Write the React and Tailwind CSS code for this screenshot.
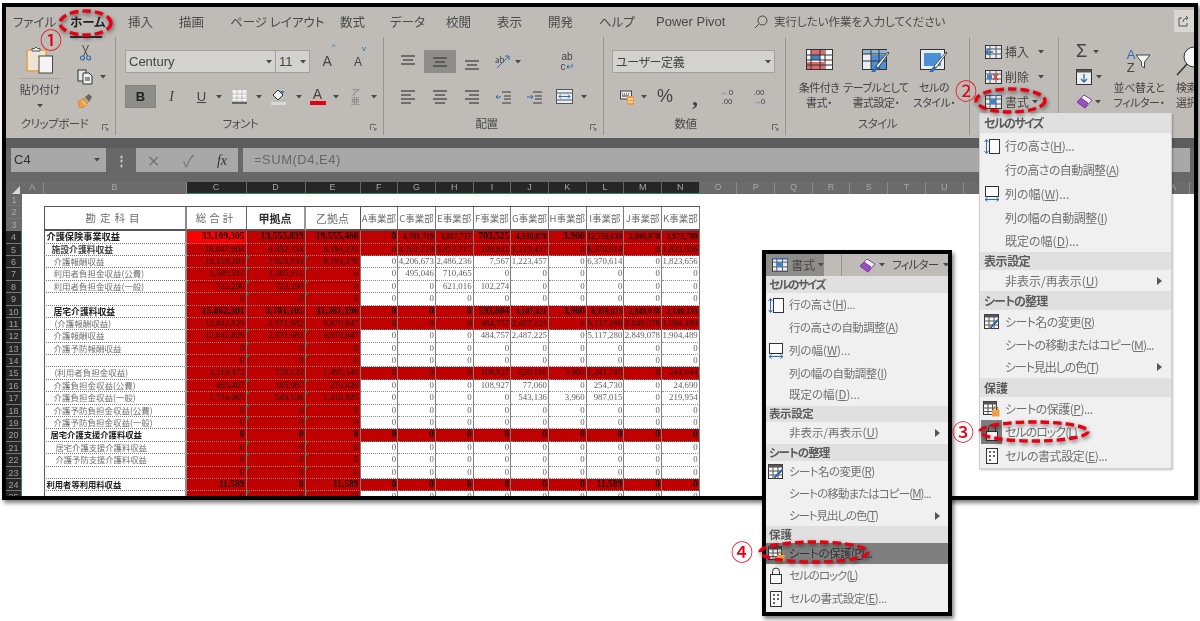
import React from 'react';

const jp = "[font-family:'Noto_Sans_CJK_JP','Liberation_Sans',sans-serif] [font-feature-settings:'palt']";

// ---- small ribbon drawings ----
function Caret({ className = '' }) {
  return (
    <svg width="6" height="4" viewBox="0 0 6 4" className={className}>
      <path d="M0 0h6L3 3.5z" fill="#4a4a4a" />
    </svg>
  );
}

function Lines({ rows, y0 = 0, gap = 4 }) {
  return (
    <svg width="16" height="16" viewBox="0 0 16 16">
      {rows.map((r, i) => (
        <line key={i} x1={r[0]} x2={r[1]} y1={y0 + i * gap} y2={y0 + i * gap} stroke="#3c3c3c" strokeWidth="1.2" />
      ))}
    </svg>
  );
}

function Paste() {
  return (
    <svg width="28" height="28" viewBox="0 0 28 28">
      <rect x="1" y="4" width="19" height="21" fill="#efe4d2" stroke="#e2a256" strokeWidth="1.6" />
      <path d="M6 5V2.5h2.5L10 1l1.5 1.5H14V5z" fill="#e8e8e8" stroke="#555" />
      <rect x="13" y="10" width="13.5" height="17" fill="#f4f4f4" stroke="#444" />
    </svg>
  );
}

function Scissors() {
  return (
    <svg width="13" height="16" viewBox="0 0 13 16">
      <path d="M3.5 0l5 11M9.5 0l-5 11" stroke="#444" fill="none" />
      <circle cx="3.4" cy="13" r="2" stroke="#2f6db3" fill="none" strokeWidth="1.2" />
      <circle cx="9.6" cy="13" r="2" stroke="#2f6db3" fill="none" strokeWidth="1.2" />
    </svg>
  );
}

function CopyIcon() {
  return (
    <svg width="17" height="16" viewBox="0 0 17 16">
      <rect x="1" y="1" width="8" height="11" fill="#e6e6e6" stroke="#333" />
      <path d="M6 4h6l3 3v8H6z" fill="#efefef" stroke="#333" />
      <path d="M8 9h5M8 11h5" stroke="#333" />
    </svg>
  );
}

function Brush() {
  return (
    <svg width="17" height="16" viewBox="0 0 17 16">
      <path d="M1 9l6-4 4 5-5 5-2-1-1 1z" fill="#ef9f45" stroke="#d98a2e" />
      <path d="M8 4l4-3 3 3-3 5z" fill="#666" />
      <path d="M5 8l4 4" stroke="#fff" />
    </svg>
  );
}

function BorderIcon() {
  return (
    <svg width="15" height="14" viewBox="0 0 15 14">
      <rect x="0.5" y="0" width="14" height="11" fill="#f2f2f2" />
      <path d="M0.5 4h14M0.5 8h14M5 0v11M10 0v11" stroke="#999" strokeDasharray="1 1" />
      <rect x="0" y="12" width="15" height="2" fill="#666" />
    </svg>
  );
}

function FillIcon() {
  return (
    <svg width="16" height="16" viewBox="0 0 16 16">
      <path d="M2 6l5-5 5 5-5 5z" fill="#f2f2f2" stroke="#333" />
      <path d="M9 2l3 3 1-3z" fill="#2f6db3" />
      <rect x="0" y="13" width="15" height="3" fill="#d9d9d9" />
    </svg>
  );
}

function Furigana() {
  return (
    <div className="flex flex-col items-center leading-[9px] text-[9px] text-[#777]">
      <span>ア</span>
      <span>亜</span>
    </div>
  );
}

function NumFormat() {
  return (
    <svg width="16" height="16" viewBox="0 0 16 16">
      <rect x="0.5" y="2" width="11" height="8" fill="#e8e8e8" stroke="#444" />
      <path d="M2 5h1M4 5h1M6 5h1M8 5h1M2 7h7" stroke="#333" />
      <rect x="7" y="7" width="7" height="9" fill="#ee9a45" />
      <path d="M8 10h5M8 13h5" stroke="#fff" />
    </svg>
  );
}

function CondIcon() {
  return (
    <svg width="27" height="21" viewBox="0 0 27 21">
      <rect x="0.5" y="0.5" width="26" height="20" fill="#f5f5f5" stroke="#333" />
      <rect x="5" y="1" width="13" height="5" fill="#e06a6a" />
      <rect x="5" y="6" width="9" height="5" fill="#3d83cc" />
      <rect x="1" y="13" width="17" height="7" fill="#e06a6a" />
      <path d="M5 0v21M14 0v21M19 0v21M0 6h27M0 11h27M0 16h27" stroke="#333" />
    </svg>
  );
}

function TableIcon() {
  return (
    <svg width="28" height="26" viewBox="0 0 28 26">
      <rect x="0.5" y="0.5" width="24" height="20" fill="#e9eef4" stroke="#333" />
      <rect x="1" y="1" width="24" height="4" fill="#8fb3d6" />
      <rect x="9" y="6" width="15" height="14" fill="#4a90d6" />
      <path d="M9 0v21M17 0v21M0 5h25M0 12h25" stroke="#333" />
      <path d="M27 4L16 19l-2-2L26 3z" fill="#f4f4f4" stroke="#444" />
      <path d="M14 17l2 2-3 4-4 0z" fill="#2f6db3" />
    </svg>
  );
}

function CellStyleIcon() {
  return (
    <svg width="28" height="26" viewBox="0 0 28 26">
      <rect x="0.5" y="0.5" width="24" height="20" fill="#e9eef4" stroke="#333" />
      <rect x="4" y="4" width="17" height="13" fill="#4a90d6" />
      <path d="M27 4L16 19l-2-2L26 3z" fill="#f4f4f4" stroke="#444" />
      <path d="M14 17l2 2-3 4-4 0z" fill="#2f6db3" />
    </svg>
  );
}

function GridSmall({ kind }) {
  return (
    <svg width="17" height="14" viewBox="0 0 17 14">
      <rect x="0.5" y="0.5" width="16" height="13" fill="#e8eef4" stroke="#333" />
      <path d="M5 0v14M11 0v14M0 4h17M0 9h17" stroke="#555" />
      {kind === 'ins' && <path d="M8 7H1M4 4L1 7l3 3" stroke="#2f6db3" fill="none" strokeWidth="1.4" />}
      {kind === 'del' && <path d="M8 4l5 6M13 4l-5 6" stroke="#d6403a" strokeWidth="1.4" />}
      {kind === 'del' && <rect x="2" y="5" width="5" height="4" fill="#3d83cc" />}
      {kind === 'fmt' && <rect x="5" y="4" width="6" height="5" fill="#3d83cc" />}
      {kind === 'fmt' && <path d="M0 0h17" stroke="#2f6db3" strokeWidth="2" />}
    </svg>
  );
}

function Eraser() {
  return (
    <svg width="17" height="15" viewBox="0 0 17 15">
      <path d="M1 8l7-7 8 5-7 8z" fill="#f3f3f3" stroke="#7b3fa0" />
      <path d="M1 8l4-4 7 5-3 5z" fill="#9a4fc0" stroke="#7b3fa0" />
    </svg>
  );
}

function FillDown() {
  return (
    <svg width="16" height="16" viewBox="0 0 16 16">
      <rect x="0.5" y="0.5" width="15" height="15" fill="#eeeeee" stroke="#333" />
      <rect x="0.5" y="0.5" width="15" height="3" fill="#555" />
      <path d="M8 5v8M5 10l3 3 3-3" stroke="#2f6db3" fill="none" strokeWidth="1.3" />
    </svg>
  );
}

// ---- menu drawings ----
function RowHeightIcon() {
  return (
    <svg width="16" height="17" viewBox="0 0 16 17">
      <rect x="5.5" y="1.5" width="10" height="14" fill="#fbfbfb" stroke="#333" />
      <path d="M2.5 2v13M0.5 4l2-2.5 2 2.5M0.5 13l2 2.5 2-2.5" stroke="#2f6db3" fill="none" />
    </svg>
  );
}

function ColWidthIcon() {
  return (
    <svg width="16" height="16" viewBox="0 0 16 16">
      <rect x="1.5" y="0.5" width="13" height="10" fill="#fbfbfb" stroke="#333" />
      <path d="M1 13.5h14M3.5 11.5l-2.5 2 2.5 2M12.5 11.5l2.5 2-2.5 2" stroke="#2f6db3" fill="none" />
    </svg>
  );
}

function RenameIcon() {
  return (
    <svg width="16" height="16" viewBox="0 0 16 16">
      <rect x="0.5" y="0.5" width="14" height="14" fill="#fafafa" stroke="#333" />
      <rect x="0.5" y="0.5" width="14" height="3" fill="#555" />
      <path d="M5 0v15M0 7h15M0 11h15M10 0v15" stroke="#555" />
      <path d="M15 6l-7 7-2 2 1-3 7-7z" fill="#2f6db3" stroke="#2f6db3" />
    </svg>
  );
}

function ProtectIcon() {
  return (
    <svg width="17" height="16" viewBox="0 0 17 16">
      <rect x="0.5" y="0.5" width="13" height="13" fill="#fafafa" stroke="#333" />
      <rect x="0.5" y="0.5" width="13" height="3" fill="#555" />
      <path d="M5 0v14M0 7h14M0 10.5h14M9.5 0v14" stroke="#555" />
      <rect x="9" y="9" width="7.5" height="6.5" fill="#eda04a" />
      <path d="M10.5 9V7.5a2.2 2.2 0 0 1 4.4 0V9" fill="none" stroke="#b87a30" />
    </svg>
  );
}

function LockIcon() {
  return (
    <svg width="14" height="17" viewBox="0 0 14 17">
      <rect x="1.5" y="7.5" width="11" height="9" fill="#f8f8f8" stroke="#333" />
      <path d="M3.5 7.5V4.5a3.5 3.5 0 0 1 7 0v3" fill="none" stroke="#333" />
    </svg>
  );
}

function FormatCellsIcon() {
  return (
    <svg width="12" height="16" viewBox="0 0 12 16">
      <rect x="0.5" y="0.5" width="11" height="15" fill="#fafafa" stroke="#333" />
      <path d="M3 4h2M3 8h2M3 12h2M7 4h2M7 8h2" stroke="#333" strokeWidth="1.3" />
    </svg>
  );
}

// ---- menus ----
function menuRows() {
  return [
    { band: 'セルのサイズ', tr: 'tracking-[-1.6px]' },
    { a: '行の高さ(', k: 'H', b: ')...', icon: <RowHeightIcon />, tr: 'tracking-[-0.4px]' },
    { a: '行の高さの自動調整(', k: 'A', b: ')', tr: 'tracking-[-0.6px]' },
    { a: '列の幅(', k: 'W', b: ')...', icon: <ColWidthIcon />, tr: '' },
    { a: '列の幅の自動調整(', k: 'I', b: ')', tr: 'tracking-[-0.4px]' },
    { a: '既定の幅(', k: 'D', b: ')...', tr: '' },
    { band: '表示設定', tr: 'tracking-[-0.4px]' },
    { a: '非表示/再表示(', k: 'U', b: ')', arrow: true, tr: '' },
    { band: 'シートの整理', tr: 'tracking-[-0.9px]' },
    { a: 'シート名の変更(', k: 'R', b: ')', icon: <RenameIcon />, tr: 'tracking-[-0.6px]' },
    { a: 'シートの移動またはコピー(', k: 'M', b: ')...', tr: 'tracking-[-0.9px]' },
    { a: 'シート見出しの色(', k: 'T', b: ')', arrow: true, tr: 'tracking-[-1.1px]' },
    { band: '保護', tr: '' },
    { a: 'シートの保護(', k: 'P', b: ')...', icon: <ProtectIcon />, id: 'protect', tr: 'tracking-[-0.5px]' },
    { a: 'セルのロック(', k: 'L', b: ')', icon: <LockIcon />, id: 'lock', tr: 'tracking-[-1px]' },
    { a: 'セルの書式設定(', k: 'E', b: ')...', icon: <FormatCellsIcon />, tr: 'tracking-[-0.4px]' },
  ];
}

const menu1H = ['h-[20px]', 'h-[26px]', 'h-[22px]', 'h-[26px]', 'h-[22px]', 'h-[23px]', 'h-[18px]', 'h-[21px]', 'h-[19px]', 'h-[23px]', 'h-[23px]', 'h-[22px]', 'h-[19px]', 'h-[23px]', 'h-[24px]', 'h-[24px]'];
const menu2H = ['h-[17px]', 'h-[24px]', 'h-[21px]', 'h-[25px]', 'h-[21px]', 'h-[22px]', 'h-[16px]', 'h-[22px]', 'h-[17px]', 'h-[22px]', 'h-[22px]', 'h-[21px]', 'h-[17px]', 'h-[21px]', 'h-[23px]', 'h-[24px]'];

function MenuRows({ heights, hot, iconHot, textPad, iconW, bandPad, arrowPad, size }) {
  return menuRows().map((r, i) =>
    r.band ? (
      <div key={i} className={`${heights[i]} ${bandPad} ${r.tr} flex items-center bg-[#e0e0e0] font-bold text-[#5c5c5c] ${size}`}>
        {r.band}
      </div>
    ) : (
      <div key={i} className={`${heights[i]} flex items-center ${r.id && r.id === hot ? 'bg-[#7f7f7f] text-[#333]' : 'text-[#707070]'} ${size}`}>
        <div className={`${iconW} h-full flex items-center justify-center shrink-0 ${r.id && r.id === iconHot ? 'bg-[#7f7f7f]' : ''}`}>{r.icon}</div>
        <span className={`${textPad} ${r.tr} whitespace-nowrap`}>
          {r.a}<u>{r.k}</u>{r.b}
        </span>
        {r.arrow && (
          <svg width="5" height="8" viewBox="0 0 5 8" className={`ml-auto ${arrowPad}`}>
            <path d="M0 0l5 4-5 4z" fill="#555" />
          </svg>
        )}
      </div>
    )
  );
}

function Ellipse({ className, w, h }) {
  return (
    <svg width={w} height={h} viewBox={`0 0 ${w} ${h}`} className={`absolute drop-shadow-[1px_2px_2px_rgba(0,0,0,0.55)] ${className}`}>
      <ellipse cx={w / 2} cy={h / 2} rx={w / 2 - 2} ry={h / 2 - 2} fill="none" stroke="#e60012" strokeWidth="3.4" strokeDasharray="8.5 4" />
    </svg>
  );
}

// ---- sheet data ----
const z = ['0', '0', '0', '0', '0', '0', '0', '0', '0'];
const sheetRows = [
  { n: 4, l: '介護保険事業収益', p: 'pl-[2px] text-[9.2px]', bold: true, red: true, c: ['33,109,305', '13,553,839', '19,555,466', '0', '4,701,719', '3,817,717', '703,525', '4,330,878', '3,960', '12,739,639', '2,849,078', '3,972,789'] },
  { n: 5, l: '施設介護料収益', p: 'pl-[7px] text-[8.8px]', semi: true, red: true, c: ['18,047,004', '9,852,734', '8,194,270', '0', '4,701,719', '3,817,717', '109,841', '1,223,457', '0', '6,370,614', '0', '1,823,656'] },
  { n: 6, l: '介護報酬収益', p: 'pl-[9px] text-[8.5px]', c: ['16,118,203', '7,923,933', '8,194,270', '0', '4,206,673', '2,486,236', '7,567', '1,223,457', '0', '6,370,614', '0', '1,823,656'] },
  { n: 7, l: '利用者負担金収益(公費)', p: 'pl-[9px] text-[8.5px]', c: ['1,205,511', '1,205,511', '0', '0', '495,046', '710,465', '0', '0', '0', '0', '0', '0'] },
  { n: 8, l: '利用者負担金収益(一般)', p: 'pl-[9px] text-[8.5px]', c: ['723,290', '723,290', '0', '0', '0', '621,016', '102,274', '0', '0', '0', '0', '0'] },
  { n: 9, l: '', p: '', c: ['0', '0', '0', ...z] },
  { n: 10, l: '居宅介護料収益', p: 'pl-[9px] text-[8.8px]', bold: true, red: true, c: ['15,062,301', '3,701,105', '11,361,196', '0', '0', '0', '593,684', '3,107,421', '3,960', '6,359,025', '2,849,078', '2,149,133'] },
  { n: 11, l: '(介護報酬収益)', p: 'pl-[10px] text-[8.5px]', red: true, c: ['12,842,829', '2,971,982', '9,870,847', '0', '0', '0', '484,757', '2,487,225', '0', '5,117,280', '2,849,078', '1,904,489'] },
  { n: 12, l: '介護報酬収益', p: 'pl-[9px] text-[8.5px]', c: ['12,842,829', '2,971,982', '9,870,847', '0', '0', '0', '484,757', '2,487,225', '0', '5,117,280', '2,849,078', '1,904,489'] },
  { n: 13, l: '介護予防報酬収益', p: 'pl-[9px] text-[8.5px]', c: ['0', '0', '0', ...z] },
  { n: 14, l: '', p: '', c: ['0', '0', '0', ...z] },
  { n: 15, l: '(利用者負担金収益)', p: 'pl-[10px] text-[8.5px]', red: true, c: ['2,219,472', '729,123', '1,490,349', '0', '0', '0', '108,927', '620,196', '3,960', '1,241,745', '0', '244,644'] },
  { n: 16, l: '介護負担金収益(公費)', p: 'pl-[9px] text-[8.5px]', c: ['465,407', '185,987', '279,420', '0', '0', '0', '108,927', '77,060', '0', '254,730', '0', '24,690'] },
  { n: 17, l: '介護負担金収益(一般)', p: 'pl-[9px] text-[8.5px]', c: ['1,754,065', '543,136', '1,210,929', '0', '0', '0', '0', '543,136', '3,960', '987,015', '0', '219,954'] },
  { n: 18, l: '介護予防負担金収益(公費)', p: 'pl-[9px] text-[8.5px]', c: ['0', '0', '0', ...z] },
  { n: 19, l: '介護予防負担金収益(一般)', p: 'pl-[9px] text-[8.5px]', c: ['0', '0', '0', ...z] },
  { n: 20, l: '居宅介護支援介護料収益', p: 'pl-[6px] text-[8.3px]', bold: true, red: true, c: ['0', '0', '0', ...z] },
  { n: 21, l: '居宅介護支援介護料収益', p: 'pl-[11px] text-[8.3px]', c: ['0', '0', '0', ...z] },
  { n: 22, l: '介護予防支援介護料収益', p: 'pl-[11px] text-[8.3px]', c: ['0', '0', '0', ...z] },
  { n: 23, l: '', p: '', c: ['0', '0', '0', ...z] },
  { n: 24, l: '利用者等利用料収益', p: 'pl-[2px] text-[8.3px]', bold: true, red: true, c: ['11,589', '0', '11,589', '0', '0', '0', '0', '0', '0', '11,589', '0', '0'] },
  { n: 25, l: '', p: '', c: ['0', '0', '0', ...z] },
];

const colWidth = ['w-[60px]', 'w-[59px]', 'w-[55px]', ...Array(9).fill('w-[37.7px]')];
const deptNames = ['A', 'C', 'E', 'F', 'G', 'H', 'I', 'J', 'K'];
const colLetters = ['C', 'D', 'E', 'F', 'G', 'H', 'I', 'J', 'K', 'L', 'M', 'N'];
const restCols = ['O', 'P', 'Q', 'R', 'S', 'T', 'U', 'V', 'W', 'X', 'Y', 'Z', 'AA'];

function numSize(row, i, v) {
  if (row.bold) {
    if (i < 3) return 'text-[9.5px] font-bold';
    return v.length > 7 ? 'text-[7.8px] font-bold' : 'text-[9.5px] font-bold';
  }
  return 'text-[8.8px]';
}

function SheetRow({ row }) {
  const labelCls = row.bold ? 'font-bold text-[#222]' : row.semi ? 'font-bold text-[#444]' : 'text-[#707070]';
  return (
    <div className="flex h-[12.4px]">
      <div className={`w-[143px] shrink-0 h-full overflow-hidden whitespace-nowrap border-l border-l-[#555] border-r-2 border-r-[#8a8a8a] border-b border-b-[#777] [border-bottom-style:dotted] leading-[11.4px] ${row.p} ${labelCls}`}>
        {row.l}
      </div>
      {row.c.map((v, i) => {
        const red = i < 3 || row.red;
        const bright = row.n === 4 && i === 0;
        const tick = !row.bold && !row.semi && !row.red && (i === 1 || i === 2);
        return (
          <div
            key={i}
            className={`${colWidth[i]} relative shrink-0 h-full text-right pr-[1px] overflow-hidden whitespace-nowrap leading-[11.4px] border-r border-r-[#7c7c7c] border-b border-b-[#8a8a8a] [border-bottom-style:dotted] [font-family:'Liberation_Serif',serif] ${numSize(row, i, v)} ${bright ? 'bg-[#ff0000]' : red ? 'bg-[#c00000]' : 'bg-white'} ${row.bold ? 'text-[#140000]' : red ? 'text-[#1a0000]' : 'text-[#606060]'}`}
          >
            {v}
            {tick && <span className="absolute left-0 top-0 border-t-[3px] border-r-[3px] border-t-[#0f7a2a] border-r-transparent" />}
          </div>
        );
      })}
    </div>
  );
}

function Sheet() {
  const rowNums = Array.from({ length: 25 }, (_, i) => i + 1);
  return (
    <div className="flex-1 min-h-0 flex flex-col overflow-hidden">
      <div className="flex h-[12px] shrink-0 bg-[#6b6b6b] text-[9px] leading-[11px] text-[#a8a8a8] [font-family:'Liberation_Sans',sans-serif]">
        <div className="w-[16px] shrink-0 flex items-end justify-end pr-[2px]">
          <div className="border-l-[8px] border-b-[8px] border-l-transparent border-b-[#d8d8d8]" />
        </div>
        <div className="w-[21.5px] shrink-0 text-center border-r border-r-[#8a8a8a]">A</div>
        <div className="w-[143px] shrink-0 text-center border-r border-r-[#8a8a8a]">B</div>
        {colLetters.map((c, i) => (
          <div key={c} className={`${colWidth[i]} shrink-0 text-center bg-[#262626] border-r border-r-[#666] border-b border-b-[#2f8a56]`}>{c}</div>
        ))}
        {restCols.map((c) => (
          <div key={c} className="w-[37.7px] shrink-0 text-center border-r border-r-[#8a8a8a]">{c}</div>
        ))}
      </div>
      <div className="flex bg-white">
        <div className="w-[16px] shrink-0 text-center text-[9px] leading-[12px] [font-family:'Liberation_Sans',sans-serif]">
          {rowNums.map((n) => (
            <div key={n} className={`h-[12.4px] border-b border-b-[#777] ${n < 4 ? 'bg-[#6b6b6b] text-[#aaa]' : 'bg-[#262626] text-[#a0a0a0] border-r border-r-[#2f8a56]'}`}>{n}</div>
          ))}
        </div>
        <div className="pl-[21.5px] pt-[12.4px]">
          <div className="flex h-[24.8px] border-t border-t-[#555] text-[#6c6c6c]">
            <div className="w-[143px] shrink-0 border-l border-l-[#555] border-r-2 border-r-[#8a8a8a] border-b-2 border-b-[#555] flex items-center justify-center text-[10.5px] tracking-[4px]">勘定科目</div>
            <div className={`${colWidth[0]} shrink-0 border-r border-r-[#666] border-b-2 border-b-[#555] flex items-center justify-center text-[10.5px] tracking-[3px]`}>総合計</div>
            <div className={`${colWidth[1]} shrink-0 border-r-2 border-r-[#999] border-b-2 border-b-[#555] flex items-center justify-center text-[11px] font-bold text-[#333]`}>甲拠点</div>
            <div className={`${colWidth[2]} shrink-0 border-r border-r-[#555] border-b-2 border-b-[#555] flex items-center justify-center text-[11px]`}>乙拠点</div>
            {deptNames.map((d) => (
              <div key={d} className="w-[37.7px] shrink-0 border-r border-r-[#7c7c7c] border-b-2 border-b-[#555] flex items-center justify-center text-[9.5px] whitespace-nowrap">{d}事業部</div>
            ))}
          </div>
          {sheetRows.map((row) => (
            <SheetRow key={row.n} row={row} />
          ))}
        </div>
      </div>
    </div>
  );
}

function GroupLabel({ children, launcher = true, className = '' }) {
  return (
    <div className={`relative h-[18px] mt-auto mb-[2px] flex items-center justify-center text-[11.5px] tracking-[-0.5px] text-[#4a4a4a] ${className}`}>
      {children}
      {launcher && (
        <svg width="7" height="7" viewBox="0 0 7 7" className="absolute right-[6px] bottom-[2px]">
          <path d="M0.5 6V0.5H6M3 3l3 3M4 6h2V4" stroke="#666" fill="none" />
        </svg>
      )}
    </div>
  );
}

function Ribbon() {
  return (
    <div className="flex h-[101px] bg-[#bfbbb7] shrink-0 text-[#444]">
      {/* clipboard */}
      <div className="w-[110px] shrink-0 flex flex-col border-r border-r-[#999692] mb-[3px]">
        <div className="flex">
          <div className="w-[48px] ml-[10px] flex flex-col items-center pt-[9px]">
            <Paste />
            <div className="mt-[4px] w-[40px] border-t border-t-[#a8a5a1]" />
            <div className="text-[11px] tracking-[-0.3px] leading-[18px] mt-[1px] whitespace-nowrap">貼り付け</div>
            <Caret className="mt-[6px]" />
          </div>
          <div className="flex flex-col items-start ml-[13px] pt-[8px] gap-[8px]">
            <div className="w-[17px] flex justify-center"><Scissors /></div>
            <div className="flex items-center gap-[6px]"><CopyIcon /><Caret /></div>
            <div className="w-[17px] flex justify-center"><Brush /></div>
          </div>
        </div>
        <GroupLabel className="pr-[12px]">クリップボード</GroupLabel>
      </div>
      {/* font */}
      <div className="w-[268px] shrink-0 flex flex-col border-r border-r-[#999692] mb-[3px]">
        <div className="flex items-center h-[23px] mt-[13px] ml-[9px]">
          <div className="w-[151px] h-full bg-[#d4d2cf] border border-[#a3a19e] flex items-center px-[3px] text-[13px] text-[#444] [font-family:'Liberation_Sans',sans-serif]">
            Century<Caret className="ml-auto" />
          </div>
          <div className="w-[34px] h-full bg-[#d4d2cf] border border-[#a3a19e] border-l-0 flex items-center px-[3px] text-[13px] text-[#444] [font-family:'Liberation_Sans',sans-serif]">
            11<Caret className="ml-auto" />
          </div>
          <div className="w-[38px] flex justify-center text-[14px] [font-family:'Liberation_Sans',sans-serif]">A<sup className="text-[#2f6db3] text-[8px]">^</sup></div>
          <div className="w-[24px] flex justify-center text-[12px] [font-family:'Liberation_Sans',sans-serif]">A<sup className="text-[#2f6db3] text-[8px]">v</sup></div>
        </div>
        <div className="flex items-center h-[23px] mt-[12px] ml-[9px] [font-family:'Liberation_Sans',sans-serif]">
          <div className="w-[31px] h-full bg-[#8f8d8a] border border-[#85837f] flex items-center justify-center font-bold text-[13px] text-[#222]">B</div>
          <div className="w-[31px] flex justify-center italic text-[14px] [font-family:'Liberation_Serif',serif]">I</div>
          <div className="w-[29px] flex justify-center underline text-[13px]">U</div>
          <Caret />
          <div className="w-[34px] flex justify-center"><BorderIcon /></div>
          <Caret />
          <div className="w-[34px] flex justify-center"><FillIcon /></div>
          <Caret />
          <div className="w-[31px] flex flex-col items-center leading-[13px] text-[14px]">A<div className="w-[16px] h-[4px] bg-[#e60012]" /></div>
          <Caret />
          <div className="w-[32px] flex justify-center"><Furigana /></div>
          <Caret />
        </div>
        <GroupLabel className="pr-[18px]">フォント</GroupLabel>
      </div>
      {/* alignment */}
      <div className="w-[220px] shrink-0 flex flex-col border-r border-r-[#999692] mb-[3px]">
        <div className="flex items-center h-[23px] mt-[13px] ml-[8px]">
          <div className="w-[32px] flex justify-center"><Lines rows={[[1, 15], [3, 13], [1, 15]]} y0={2} /></div>
          <div className="w-[32px] h-full bg-[#8f8d8a] flex items-center justify-center"><Lines rows={[[1, 15], [3, 13], [1, 15]]} y0={4} /></div>
          <div className="w-[32px] flex justify-center"><Lines rows={[[1, 15], [3, 13], [1, 15]]} y0={7} /></div>
          <div className="w-[32px] flex justify-center">
            <svg width="18" height="16" viewBox="0 0 18 16"><path d="M2 14L14 2M10 2h4v4" stroke="#2f6db3" fill="none" /><text x="0" y="9" fontSize="8" fill="#444">ab</text></svg>
          </div>
          <Caret className="ml-[-5px]" />
          <div className="ml-[32px] w-[28px] flex flex-col items-center text-[10px] leading-[10px] [font-family:'Liberation_Sans',sans-serif]">ab<span>c<span className="text-[#2f6db3]">↵</span></span></div>
        </div>
        <div className="flex items-center h-[23px] mt-[12px] ml-[8px]">
          <div className="w-[32px] flex justify-center"><Lines rows={[[1, 15], [1, 11], [1, 15], [1, 11]]} y0={2} /></div>
          <div className="w-[32px] flex justify-center"><Lines rows={[[1, 15], [3, 13], [1, 15], [3, 13]]} y0={2} /></div>
          <div className="w-[32px] flex justify-center"><Lines rows={[[1, 15], [5, 15], [1, 15], [5, 15]]} y0={2} /></div>
          <div className="w-[32px] flex justify-center">
            <svg width="16" height="14" viewBox="0 0 16 14"><path d="M6 2h9M8 6h7M8 9h7M6 13h9" stroke="#3c3c3c" /><path d="M5 7H0M2 5L0 7l2 2" stroke="#2f6db3" fill="none" /></svg>
          </div>
          <div className="w-[30px] flex justify-center">
            <svg width="16" height="14" viewBox="0 0 16 14"><path d="M6 2h9M8 6h7M8 9h7M6 13h9" stroke="#3c3c3c" /><path d="M0 7h6M4 5l2 2-2 2" stroke="#2f6db3" fill="none" /></svg>
          </div>
          <div className="w-[28px] flex justify-center">
            <svg width="17" height="15" viewBox="0 0 17 15"><rect x="0.5" y="0.5" width="16" height="14" fill="#e8eef4" stroke="#555" /><path d="M0 4h17M0 11h17" stroke="#555" /><path d="M3 7.5h11M5 5.5l-2 2 2 2M12 5.5l2 2-2 2" stroke="#2f6db3" fill="none" /></svg>
          </div>
          <Caret className="ml-[3px]" />
        </div>
        <GroupLabel className="pr-[14px]">配置</GroupLabel>
      </div>
      {/* number */}
      <div className="w-[182px] shrink-0 flex flex-col border-r border-r-[#999692] mb-[3px]">
        <div className="flex items-center h-[23px] mt-[13px] ml-[8px] w-[163px] bg-[#d4d2cf] border border-[#a3a19e] px-[3px] text-[12px] tracking-[-0.4px]">
          ユーザー定義<Caret className="ml-auto" />
        </div>
        <div className="flex items-center h-[23px] mt-[12px] ml-[16px]">
          <NumFormat />
          <Caret className="ml-[5px]" />
          <div className="w-[30px] ml-[3px] text-center text-[18px] [font-family:'Liberation_Sans',sans-serif]">%</div>
          <div className="w-[30px] text-center text-[24px] leading-[14px] font-bold [font-family:'Liberation_Serif',serif]">,</div>
          <div className="w-[30px] ml-[2px] flex flex-col items-center text-[8px] leading-[9px] [font-family:'Liberation_Sans',sans-serif]"><span><span className="text-[#2f6db3]">←</span>0</span><span>.00</span></div>
          <div className="w-[30px] ml-[2px] flex flex-col items-center text-[8px] leading-[9px] [font-family:'Liberation_Sans',sans-serif]"><span>.00</span><span><span className="text-[#2f6db3]">→</span>0</span></div>
        </div>
        <GroupLabel className="pr-[18px]">数値</GroupLabel>
      </div>
      {/* styles */}
      <div className="w-[184px] shrink-0 flex flex-col border-r border-r-[#999692] mb-[3px]">
        <div className="flex ml-[6px] pt-[12px] text-[11px] tracking-[-0.5px] leading-[15px] text-center whitespace-nowrap">
          <div className="w-[54px] flex flex-col items-center"><div className="h-[30px]"><CondIcon /></div><span className="mt-[1px]">条件付き</span><span>書式・</span></div>
          <div className="w-[60px] flex flex-col items-center"><div className="h-[30px]"><TableIcon /></div><span className="mt-[1px]">テーブルとして</span><span>書式設定・</span></div>
          <div className="w-[56px] flex flex-col items-center"><div className="h-[30px]"><CellStyleIcon /></div><span className="mt-[1px]">セルの</span><span>スタイル・</span></div>
        </div>
        <GroupLabel launcher={false}>スタイル</GroupLabel>
      </div>
      {/* cells */}
      <div className="w-[89px] shrink-0 flex flex-col border-r border-r-[#999692] mb-[3px] text-[12px]">
        <div className="flex items-center h-[25px] mt-[2px] ml-[15px] gap-[3px]"><GridSmall kind="ins" />挿入<Caret className="ml-[6px]" /></div>
        <div className="flex items-center h-[25px] ml-[15px] gap-[3px]"><GridSmall kind="del" />削除<Caret className="ml-[6px]" /></div>
        <div className="flex items-center h-[25px] ml-[15px] gap-[3px]"><GridSmall kind="fmt" />書式<Caret /></div>
      </div>
      {/* editing */}
      <div className="flex-1 flex overflow-hidden text-[11px] tracking-[-0.4px] leading-[15px] whitespace-nowrap">
        <div className="w-[32px] ml-[17px] shrink-0 flex flex-col">
          <div className="flex items-center h-[25px] mt-[2px] gap-[6px] text-[18px] [font-family:'Liberation_Sans',sans-serif]">Σ<Caret /></div>
          <div className="flex items-center h-[25px] gap-[4px]"><FillDown /><Caret /></div>
          <div className="flex items-center h-[25px] gap-[2px]"><Eraser /><Caret /></div>
        </div>
        <div className="w-[62px] flex flex-col items-center pt-[5px] shrink-0">
          <div className="flex items-center h-[37px]">
            <div className="flex flex-col text-[13px] leading-[13px] [font-family:'Liberation_Sans',sans-serif]"><span className="text-[#2f6db3]">A</span><span>Z</span></div>
            <svg width="16" height="16" viewBox="0 0 16 16"><path d="M1 2h14L9.5 9v6L6.5 13V9z" fill="#f3f3f3" stroke="#444" /></svg>
          </div>
          <span className="mt-[1px]">並べ替えと</span>
          <span>フィルター・</span>
        </div>
        <div className="flex flex-col pt-[5px] ml-[6px]">
          <div className="h-[37px] flex items-center">
            <svg width="30" height="30" viewBox="0 0 30 30"><circle cx="18" cy="11" r="10" fill="#f6f6f6" stroke="#333" /><path d="M11 18L1 29" stroke="#333" strokeWidth="1.5" /></svg>
          </div>
          <span className="mt-[1px]">検索と</span>
          <span>選択</span>
        </div>
      </div>
    </div>
  );
}

export default function App() {
  const tabs = [
    ['ファイル', 'w-[31px]'], ['挿入', 'w-[25px]'], ['描画', 'w-[25px]'], ['ページ レイアウト', 'w-[84px]'], ['数式', 'w-[24px]'],
    ['データ', 'w-[30px]'], ['校閲', 'w-[25px]'], ['表示', 'w-[25px]'], ['開発', 'w-[25px]'], ['ヘルプ', 'w-[31px]'],
  ];
  return (
    <div className={`relative w-[1200px] h-[621px] overflow-hidden bg-white blur-[0.4px] ${jp}`}>
      {/* the dimmed excel window */}
      <div className="absolute left-[2px] top-[3px] w-[1196px] h-[497px] border-4 border-black shadow-[2px_3px_4px_rgba(0,0,0,0.5)] flex flex-col overflow-hidden bg-white">
        <div className="flex items-center h-[30px] shrink-0 bg-[#bfbbb7] pl-[7px] gap-[26px] text-[12.5px] text-[#4a4a4a] whitespace-nowrap relative">
          <div className={tabs[0][1]}>{tabs[0][0]}</div>
          <div className="w-[32px] font-bold text-[#222] relative">
            ホーム
            <span className="absolute left-0 right-0 -bottom-[7px] h-[2px] bg-[#333]" />
          </div>
          {tabs.slice(1).map((t) => (
            <div key={t[0]} className={t[1]}>{t[0]}</div>
          ))}
          <div className="w-[73px] [font-family:'Liberation_Sans',sans-serif] text-[13px]">Power Pivot</div>
          <div className="flex items-center gap-[6px] ml-[-1px] text-[11.5px]">
            <svg width="14" height="14" viewBox="0 0 14 14"><circle cx="8.5" cy="5.5" r="4.5" fill="none" stroke="#444" /><path d="M5 9l-4 4" stroke="#444" /></svg>
            実行したい作業を入力してください
          </div>
          <div className="absolute right-0 top-[3px] w-[20px] h-[22px] bg-[#d8d6d3] flex items-center justify-center">
            <svg width="12" height="12" viewBox="0 0 12 12"><path d="M4 3H1v8h8V8M5 7c0-3 2-4 5-4M8 1l2 2-2 2" fill="none" stroke="#555" /></svg>
          </div>
        </div>
        <Ribbon />
        <div className="h-[10px] shrink-0 bg-[#5c5c5c]" />
        {/* formula bar */}
        <div className="flex h-[34px] shrink-0 bg-[#686868] pl-[5px] pb-[10px] text-[#555]">
          <div className="w-[95px] h-full bg-[#a8a8a8] flex items-center px-[3px] text-[13px] text-[#333] [font-family:'Liberation_Sans',sans-serif]">C4<Caret className="ml-auto mr-[3px]" /></div>
          <div className="w-[30px] flex justify-center items-center font-bold text-[#ccc] text-[13px]">⋮</div>
          <div className="w-[102px] h-full bg-[#a8a8a8] flex items-center text-[#777]">
            <div className="w-[35px] text-center text-[16px]">✕</div>
            <div className="w-[35px] text-center text-[16px]">✓</div>
            <div className="w-[32px] text-center text-[#333] italic text-[14px] [font-family:'Liberation_Serif',serif]">fx</div>
          </div>
          <div className="flex-1 ml-[5px] mr-[4px] h-full bg-[#a8a8a8] flex items-center pl-[11px] text-[13px] tracking-[0.5px] text-[#666] [font-family:'Liberation_Sans',sans-serif]">=SUM(D4,E4)</div>
        </div>
        <Sheet />
      </div>

      {/* dropdown from the ribbon */}
      <div className="absolute left-[979px] top-[113px] w-[193px] bg-[#f0f0f0] border border-[#cfcfcf] border-t-0 shadow-[1px_1px_2px_rgba(0,0,0,0.25)]">
        <MenuRows heights={menu1H} iconHot="lock" textPad="pl-[3px]" iconW="w-[21px] ml-[1px]" bandPad="pl-[4px]" arrowPad="mr-[9px]" size="text-[12px]" />
      </div>

      {/* enlarged copy of the same menu */}
      <div className="absolute left-[762px] top-[250px] w-[190px] h-[366px] border-4 border-black bg-[#f0f0f0] shadow-[2px_3px_4px_rgba(0,0,0,0.5)] overflow-hidden">
        <div className="flex items-center h-[22px] bg-[#bfbbb7] text-[12px] text-[#444] whitespace-nowrap">
          <div className="w-[58px] h-full bg-[#8f8d8a] flex items-center pl-[6px] gap-[3px] shrink-0"><GridSmall kind="fmt" />書式<Caret /></div>
          <div className="ml-[17px] h-full border-l border-l-[#999692]" />
          <div className="ml-[17px] flex items-center gap-[3px]"><Eraser /><Caret /></div>
          <div className="ml-[7px] flex items-center gap-[5px] text-[11.5px] tracking-[-0.8px]">フィルター<Caret /></div>
        </div>
        <MenuRows heights={menu2H} hot="protect" textPad="pl-[3px]" iconW="w-[20px]" bandPad="pl-[3px]" arrowPad="mr-[8px]" size="text-[11.5px]" />
      </div>

      {/* annotations */}
      <Ellipse className="left-[58px] top-[9px]" w={55} h={28} />
      <Ellipse className="left-[974px] top-[87px]" w={73} h={27} />
      <Ellipse className="left-[978px] top-[420px]" w={112} h={23} />
      <Ellipse className="left-[758px] top-[540px]" w={112} h={24} />
      <div className="absolute left-[40px] top-[24px] text-[22px] leading-[28px] font-medium text-[#e60012]">①</div>
      <div className="absolute left-[955px] top-[75px] text-[22px] leading-[28px] text-[#e60012]">②</div>
      <div className="absolute left-[952px] top-[416px] text-[22px] leading-[28px] font-medium text-[#e60012]">③</div>
      <div className="absolute left-[731px] top-[536px] text-[22px] leading-[28px] font-medium text-[#e60012]">④</div>
    </div>
  );
}
